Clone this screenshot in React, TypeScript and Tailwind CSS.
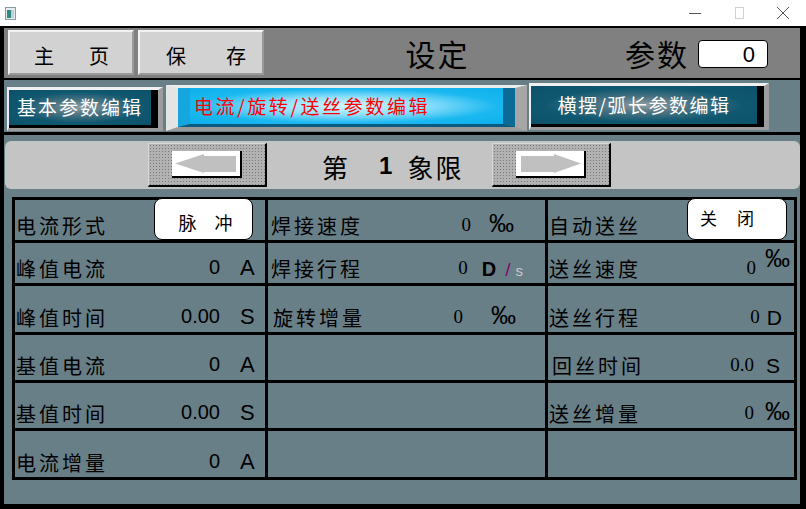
import type { ReactNode } from 'react';

const CJK = "font-['Noto_Sans_CJK_SC','Noto_Sans_CJK_JP',sans-serif]";
const SANS = "font-['Liberation_Sans',Arial,sans-serif]";
const SERIF = "font-['Liberation_Serif','Times_New_Roman',serif]";

function TitleBar() {
  return (
    <div className="h-[26px] bg-white flex items-center pl-[5px] pr-[16px]">
      <svg width="11" height="13" viewBox="0 0 11 13">
        <rect x="0.5" y="0.5" width="10" height="12" fill="#e8ecee" stroke="#8a9aa2" />
        <rect x="2" y="3" width="4" height="8" fill="#2e8a80" />
        <rect x="6" y="3" width="3" height="8" fill="#b9d3dc" />
      </svg>
      <div className="ml-auto flex items-center gap-[30px]">
        <svg width="14" height="14" viewBox="0 0 14 14">
          <line x1="1" y1="7.5" x2="13" y2="7.5" stroke="#555" strokeWidth="1" />
        </svg>
        <svg width="14" height="14" viewBox="0 0 14 14">
          <rect x="3.5" y="1.5" width="8" height="11" fill="none" stroke="#d0d0d0" />
        </svg>
        <svg width="14" height="14" viewBox="0 0 14 14">
          <path d="M1 1 L13 13 M13 1 L1 13" stroke="#555" strokeWidth="1" />
        </svg>
      </div>
    </div>
  );
}

function GrayButton({ a, b, pl, pr }: { a: string; b: string; pl: string; pr: string }) {
  return (
    <div
      className={`w-[126px] h-[45px] bg-[#d2d2d2] border-t-2 border-l-2 border-t-[#f2f2f2] border-l-[#f2f2f2] border-r-2 border-b-2 border-r-[#9a9a9a] border-b-[#9a9a9a] flex items-center justify-between pt-[6px] text-[20px] text-black ${CJK} ${pl} ${pr}`}
    >
      <span>{a}</span>
      <span>{b}</span>
    </div>
  );
}

function TealButton({ label, w, h, mt, tracking }: { label: string; w: string; h: string; mt: string; tracking: string }) {
  return (
    <div
      className={`${w} ${h} ${mt} bg-[#b4b4b4] border-t-[3px] border-l-[2px] border-t-[#f0f0f0] border-l-[#f0f0f0] border-r-[5px] border-b-[3px] border-r-[#9c9c9c] border-b-[#9c9c9c] flex`}
    >
      <div className="flex-1 flex bg-black pr-[7px] pb-[3px]">
        <div
          className={`flex-1 flex items-center justify-center bg-[radial-gradient(ellipse_at_center,#8f9ea3_0%,#4b7381_30%,#0f5870_62%,#0c5169_100%)] text-white text-[19px] ${tracking} ${CJK}`}
        >
          {label}
        </div>
      </div>
    </div>
  );
}

function CyanButton() {
  return (
    <div className="w-[361px] h-[46px] mt-[5px] bg-[#a8a8a8] border-t-[3px] border-l-[12px] border-t-[#ececec] border-l-[#e4e4e4] border-r-[12px] border-b-[4px] border-r-[#a6a6a6] border-b-[#9a9a9a] flex">
      <div className="flex-1 flex items-center pl-[4px] border-l-[12px] border-l-[#15a6de] border-r-[12px] border-r-[#0b6a96] border-b-[3px] border-b-[#0b5a82] bg-[radial-gradient(ellipse_at_center,#d4f5ff_0%,#8fe0fc_35%,#1ab8f0_68%,#0cb0ec_100%)]">
        <span className={`text-[#ff0000] text-[19px] tracking-[2.6px] ${CJK}`}>电流/旋转/送丝参数编辑</span>
      </div>
    </div>
  );
}

function ArrowButton({ dir }: { dir: 'left' | 'right' }) {
  return (
    <div className="w-[119px] h-[44px] mt-[2px] bg-[#b2b2b2] bg-[radial-gradient(circle,#7a7a7a_0.7px,transparent_0.9px)] bg-size-[3px_3px] border-t border-l border-t-[#d8d8d8] border-l-[#d8d8d8] border-r-2 border-b-2 border-r-black border-b-black flex items-center justify-center">
      <div className="w-[70px] h-[27px] bg-white border-r-2 border-b-2 border-r-black border-b-black">
        <svg width="68" height="25" viewBox="0 0 68 25">
          {dir === 'left' ? (
            <>
              <polygon points="3,12.5 32,3 32,22" fill="#c0c0c0" />
              <rect x="32" y="5" width="32" height="16" fill="#c0c0c0" />
            </>
          ) : (
            <>
              <polygon points="65,12.5 38,3 38,22" fill="#c0c0c0" />
              <rect x="5" y="5" width="33" height="16" fill="#c0c0c0" />
            </>
          )}
        </svg>
      </div>
    </div>
  );
}

function Cell({ label, children, lpl = 'pl-[1px]' }: { label?: string; children?: ReactNode; lpl?: string }) {
  return (
    <div className={`bg-[#697f88] flex items-end pb-[4px] ${lpl} relative`}>
      {label && <span className={`text-[20px] tracking-[3px] leading-none text-black ${CJK}`}>{label}</span>}
      <div className="ml-auto flex items-end">{children}</div>
    </div>
  );
}

const val1 = `text-[20px] leading-none text-black ${SANS}`;
const val2 = `text-[19px] leading-none text-black ${SERIF}`;
const unit = `text-[22px] leading-none text-black ${SANS}`;
const permille = `text-[25px] leading-none text-black ${SANS}`;

function Col1Value({ v, u }: { v: string; u: string }) {
  return (
    <>
      <span className={`${val1} mr-[20px] mb-[2px]`}>{v}</span>
      <span className={`${unit} w-[25px]`}>{u}</span>
    </>
  );
}

export default function App() {
  return (
    <div className="w-[806px] h-[509px] bg-black flex flex-col overflow-hidden">
      <TitleBar />
      <div className="h-[2px]" />
      <div className="flex-1 flex flex-col pl-[4px] pr-[6px]">
        {/* header */}
        <div className="h-[50px] bg-[#808080] flex items-start pl-[4px] pr-[32px] pt-[2px] gap-[4px]">
          <GrayButton a="主" b="页" pl="pl-[24px]" pr="pr-[23px]" />
          <GrayButton a="保" b="存" pl="pl-[26px]" pr="pr-[16px]" />
          <div className={`flex-1 h-[46px] flex items-center justify-center pr-[14px] text-[30px] text-black tracking-[2px] ${CJK}`}>
            设定
          </div>
          <div className="h-[46px] flex items-center gap-[9px]">
            <span className={`text-[30px] text-black tracking-[2px] ${CJK}`}>参数</span>
            <div className={`w-[70px] h-[28px] mt-[2px] bg-white border border-black rounded-[4px] flex items-center justify-end pr-[12px] text-[22px] text-black ${SANS}`}>
              0
            </div>
          </div>
        </div>
        <div className="h-[2px]" />
        {/* tab row */}
        <div className="h-[52px] bg-[#697f88] flex items-start pl-[3px] gap-[3px]">
          <TealButton label="基本参数编辑" w="w-[156px]" h="h-[44px]" mt="mt-[7px]" tracking="tracking-[2px]" />
          <CyanButton />
          <div className="ml-[-1px]">
            <TealButton label="横摆/弧长参数编辑" w="w-[240px]" h="h-[47px]" mt="mt-[3px]" tracking="tracking-[1.5px]" />
          </div>
        </div>
        <div className="h-[3px]" />
        {/* main */}
        <div className="flex-1 bg-[#697f88] flex flex-col pt-[6px]">
          <div className="ml-[1px] h-[48px] bg-[#c4c4c4] rounded-[6px] flex items-start pl-[143px]">
            <ArrowButton dir="left" />
            <div className="w-[225px] h-[46px] flex items-center pl-[55px] pt-[4px]">
              <span className={`text-[26px] text-black ${CJK}`}>第</span>
              <span className={`text-[24px] font-bold text-black ml-[31px] ${SANS}`}>1</span>
              <span className={`text-[26px] text-black ml-[15px] tracking-[2px] ${CJK}`}>象限</span>
            </div>
            <ArrowButton dir="right" />
          </div>

          <div className="ml-[8px] mt-[8px] w-[785px] bg-black p-[3px] grid grid-cols-[250px_277px_246px] grid-rows-[40px_40px_46px_45px_45px_46px] gap-[3px]">
            {/* row 1 */}
            <Cell label="电流形式">
              <div className={`w-[99px] h-[42px] -mb-[4px] mr-[12px] self-start bg-white border border-black rounded-[8px] flex items-center justify-center gap-[18px] pt-[6px] pl-[4px] text-[18px] text-black ${CJK}`}>
                <span>脉</span>
                <span>冲</span>
              </div>
            </Cell>
            <Cell label="焊接速度" lpl="pl-[3px]">
              <span className={`${val2} mb-[2px]`}>0</span>
              <span className={`${permille} ml-[18px] mr-[31px]`}>‰</span>
            </Cell>
            <Cell label="自动送丝">
              <div className={`w-[100px] h-[42px] -mb-[4px] mr-[7px] bg-white border border-black rounded-[8px] flex items-start gap-[20px] pt-[6px] pl-[12px] text-[17px] text-black ${CJK}`}>
                <span>关</span>
                <span>闭</span>
              </div>
            </Cell>

            {/* row 2 */}
            <Cell label="峰值电流">
              <Col1Value v="0" u="A" />
            </Cell>
            <Cell label="焊接行程" lpl="pl-[3px]">
              <span className={`${val2} mb-[2px]`}>0</span>
              <span className={`text-[20px] font-bold leading-none text-black ml-[14px] ${SANS}`}>D</span>
              <span className={`text-[19px] leading-none text-[#7a0a70] ml-[9px] ${SANS}`}>/</span>
              <span className={`text-[15px] leading-none text-[#c8c8c8] ml-[5px] mr-[22px] mb-[1px] ${SANS}`}>s</span>
            </Cell>
            <Cell label="送丝速度">
              <span className={`${val2} mb-[2px]`}>0</span>
              <span className={`${permille} ml-[9px] mr-[4px] mb-[8px]`}>‰</span>
            </Cell>

            {/* row 3 */}
            <Cell label="峰值时间">
              <Col1Value v="0.00" u="S" />
            </Cell>
            <Cell label="旋转增量" lpl="pl-[5px]">
              <span className={`${val2} mb-[2px]`}>0</span>
              <span className={`${permille} ml-[28px] mr-[29px]`}>‰</span>
            </Cell>
            <Cell label="送丝行程">
              <span className={`${val2} mb-[2px]`}>0</span>
              <span className={`text-[21px] leading-none text-black ml-[7px] mr-[12px] ${SANS}`}>D</span>
            </Cell>

            {/* row 4 */}
            <Cell label="基值电流">
              <Col1Value v="0" u="A" />
            </Cell>
            <Cell />
            <Cell label="回丝时间" lpl="pl-[4px]">
              <span className={`${val2} mb-[2px]`}>0.0</span>
              <span className={`text-[21px] leading-none text-black ml-[12px] mr-[14px] ${SANS}`}>S</span>
            </Cell>

            {/* row 5 */}
            <Cell label="基值时间">
              <Col1Value v="0.00" u="S" />
            </Cell>
            <Cell />
            <Cell label="送丝增量">
              <span className={`${val2} mb-[2px]`}>0</span>
              <span className={`${permille} ml-[11px] mr-[4px]`}>‰</span>
            </Cell>

            {/* row 6 */}
            <Cell label="电流增量">
              <Col1Value v="0" u="A" />
            </Cell>
            <Cell />
            <Cell />
          </div>
        </div>
      </div>
      <div className="h-[5px]" />
    </div>
  );
}
